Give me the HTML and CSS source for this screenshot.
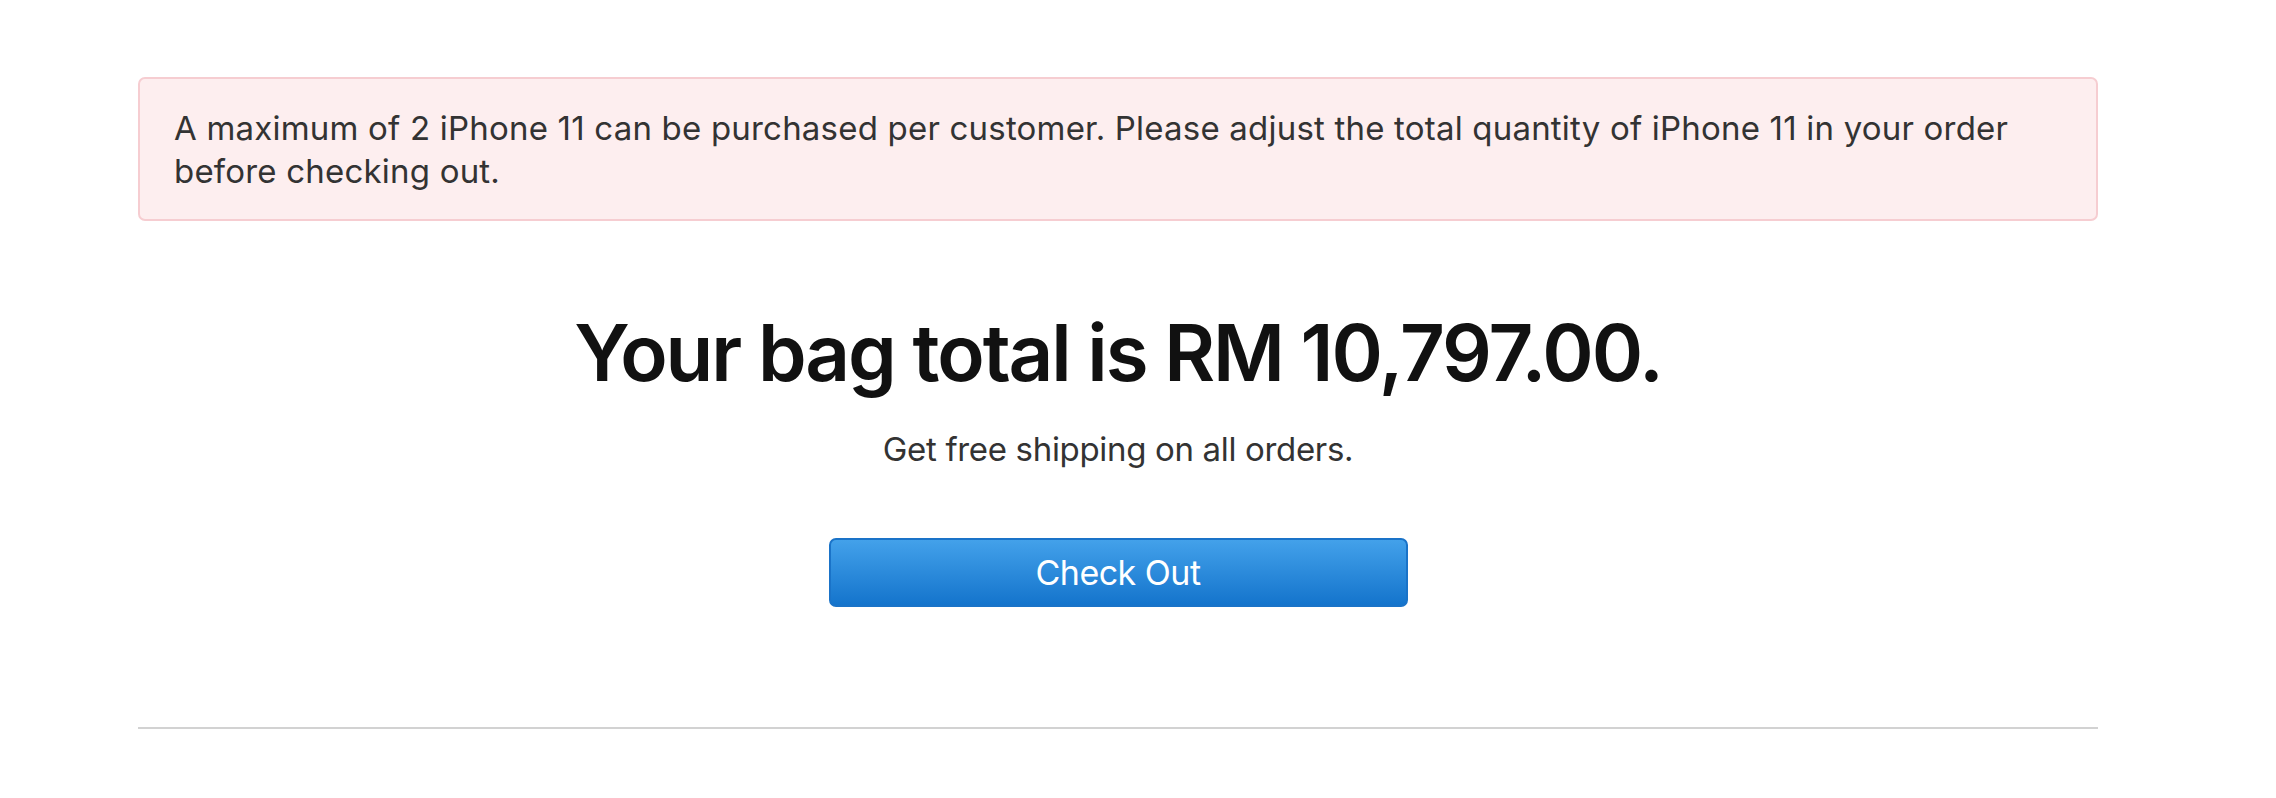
FILE: index.html
```html
<!DOCTYPE html>
<html lang="en">
<head>
<meta charset="utf-8">
<title>Bag</title>
<link rel="stylesheet" href="styles.css">
</head>
<body>
<main class="page">
  <div class="alert">A maximum of 2 iPhone 11 can be purchased per customer. Please adjust the total quantity of iPhone 11 in your order before checking out.</div>
  <section class="summary">
    <h1 class="total">Your bag total is RM 10,797.00.</h1>
    <p class="shipping">Get free shipping on all orders.</p>
    <button class="checkout" type="button">Check Out</button>
  </section>
  <hr class="divider">
</main>
</body>
</html>
```
FILE: styles.css
```css
html, body {
  margin: 0;
  padding: 0;
  background: #fff;
}
body {
  font-family: Inter, "Noto Sans", "Liberation Sans", sans-serif;
  color: #333;
}
.page {
  width: 1960px;
  margin-left: 138px;
  padding-top: 77px;
}
.alert {
  box-sizing: border-box;
  min-height: 144px;
  padding: 28px 36px 26px 34px;
  background: #fdeeef;
  border: 2px solid #f6cdd1;
  border-radius: 7px;
  font-size: 33px;
  line-height: 43px;
  color: #333;
  letter-spacing: 0.2px;
}
.summary {
  display: flex;
  flex-direction: column;
  align-items: center;
}
.total {
  margin: 88px 0 0;
  font-size: 78px;
  line-height: 88px;
  font-weight: 600;
  color: #111;
  letter-spacing: -0.026em;
}
.shipping {
  margin: 31px 0 0;
  font-size: 33px;
  line-height: 43px;
  color: #333;
  letter-spacing: -0.01em;
}
.checkout {
  margin-top: 67px;
  width: 579px;
  height: 69px;
  border: 2px solid #1a73c8;
  border-radius: 7px;
  background: linear-gradient(#43a1ea, #1474cc);
  color: #fff;
  font-family: inherit;
  font-size: 34px;
  letter-spacing: -0.015em;
  cursor: pointer;
}
.divider {
  margin: 120px 0 0;
  border: 0;
  height: 2px;
  background: #d2d2d2;
}
```
